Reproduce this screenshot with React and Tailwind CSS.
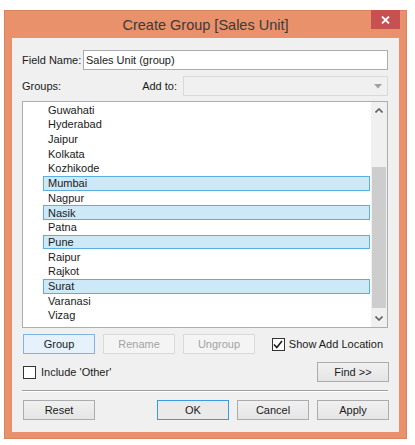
import React from 'react';

// Create Group dialog – Windows 8 style window chrome
const cities = [
  ['Guwahati', false],
  ['Hyderabad', false],
  ['Jaipur', false],
  ['Kolkata', false],
  ['Kozhikode', false],
  ['Mumbai', true],
  ['Nagpur', false],
  ['Nasik', true],
  ['Patna', false],
  ['Pune', true],
  ['Raipur', false],
  ['Rajkot', false],
  ['Surat', true],
  ['Varanasi', false],
  ['Vizag', false],
];

function Btn({ children, variant }) {
  const base = 'w-[72px] h-[20px] flex items-center justify-center border box-border';
  if (variant === 'focus')
    return <div className={`${base} border-[#7eb4ea] bg-[#e5f1fb] text-[#1a1a1a]`}>{children}</div>;
  if (variant === 'default')
    return <div className={`${base} border-[#3c9be0] bg-[#eaeaea] text-[#1a1a1a]`}>{children}</div>;
  if (variant === 'disabled')
    return <div className={`${base} border-[#d9d9d9] bg-[#f4f4f4] text-[#a3a3a3]`}>{children}</div>;
  return <div className={`${base} border-[#acacac] bg-gradient-to-b from-[#f0f0f0] to-[#e5e5e5] text-[#1a1a1a]`}>{children}</div>;
}

function Checkbox({ checked }) {
  return (
    <div className="w-[13px] h-[13px] border border-[#333] bg-white flex items-center justify-center box-border">
      {checked && (
        <svg width="10" height="9" viewBox="0 0 10 9">
          <path d="M1 4.5 L3.8 7.5 L9 1" fill="none" stroke="#222" strokeWidth="1.7" />
        </svg>
      )}
    </div>
  );
}

function Chevron({ up }) {
  return (
    <svg width="8" height="5" viewBox="0 0 8 5">
      <path d={up ? 'M0.5 4.5 L4 1 L7.5 4.5' : 'M0.5 0.5 L4 4 L7.5 0.5'} fill="none" stroke="#606060" strokeWidth="1.6" />
    </svg>
  );
}

export default function App() {
  return (
    <div className="w-[415px] h-[445px] bg-white overflow-hidden text-[11px] text-[#1a1a1a] whitespace-nowrap" style={{ fontFamily: '"Liberation Sans", Arial, sans-serif' }}>
      {/* window frame */}
      <div className="ml-[4px] mt-[10px] w-[403px] h-[429px] bg-[#e8916a] border border-[#d98460] box-border flex flex-col">
        {/* title bar */}
        <div className="h-[27px] flex items-start">
          <div className="w-[35px]" />
          <div className="flex-1 text-center text-[14.5px] text-[#3a3a3a] pt-[5px] leading-[18px]">Create Group [Sales Unit]</div>
          <div className="w-[29px] h-[19px] mr-[6px] -mt-[1px] bg-[#c75050] flex items-center justify-center">
            <svg width="9" height="8" viewBox="0 0 9 8">
              <path d="M1 0.5 L8 7.5 M8 0.5 L1 7.5" stroke="#fff" strokeWidth="1.8" />
            </svg>
          </div>
        </div>

        {/* client area */}
        <div className="mx-[7px] h-[394px] bg-[#f0f0f0] pl-[10px] pr-[11px] pt-[12px] flex flex-col">
          {/* field name */}
          <div className="h-[20px] flex items-center">
            <div className="w-[61px] shrink-0">Field Name:</div>
            <div className="flex-1 h-[20px] bg-white border border-[#abadb3] box-border flex items-center pl-[2px]">
              Sales Unit (group)
            </div>
          </div>

          {/* groups / add to */}
          <div className="mt-[6px] h-[20px] flex items-center">
            <div>Groups:</div>
            <div className="flex-1" />
            <div className="mr-[6px]">Add to:</div>
            <div className="w-[205px] h-[20px] bg-[#f0f0f0] border border-[#d9d9d9] box-border flex items-center justify-end pr-[5px]">
              <svg width="8" height="5" viewBox="0 0 8 5">
                <path d="M0 0 L8 0 L4 4.5 Z" fill="#a0a0a0" />
              </svg>
            </div>
          </div>

          {/* list box */}
          <div className="mt-[5px] h-[227px] bg-white border border-[#abadb3] box-border flex">
            <div className="flex-1 pl-[20px] pr-[1px] pt-[0.6px] overflow-hidden flex flex-col">
              {cities.map(([name, sel]) => (
                <div
                  key={name}
                  className={`h-[14.7px] shrink-0 flex items-center pl-[4px] box-border ${sel ? 'bg-[#cde8f7] border border-[#5aaee0]' : 'border border-transparent'}`}
                >
                  {name}
                </div>
              ))}
            </div>
            {/* scrollbar */}
            <div className="w-[16px] bg-[#f0f0f0] flex flex-col">
              <div className="h-[17px] flex items-center justify-center">
                <Chevron up />
              </div>
              <div className="h-[48px]" />
              <div className="h-[141px] mx-[1px] bg-[#cdcdcd]" />
              <div className="flex-1" />
              <div className="h-[17px] flex items-center justify-center">
                <Chevron />
              </div>
            </div>
          </div>

          {/* action buttons */}
          <div className="mt-[6px] h-[20px] flex items-center pl-[1px]">
            <div className="flex gap-[8px]">
              <Btn variant="focus">Group</Btn>
              <Btn variant="disabled">Rename</Btn>
              <Btn variant="disabled">Ungroup</Btn>
            </div>
            <div className="ml-auto mr-[5px] flex items-center gap-[4px]">
              <Checkbox checked />
              <span>Show Add Location</span>
            </div>
          </div>

          {/* include other / find */}
          <div className="mt-[8px] h-[20px] flex items-center pl-[1px]">
            <div className="flex items-center gap-[5px]">
              <Checkbox />
              <span>Include 'Other'</span>
            </div>
            <div className="ml-auto -mr-[1px]">
              <Btn>Find &gt;&gt;</Btn>
            </div>
          </div>

          {/* separator */}
          <div className="mt-[8px] h-[1px] bg-[#a0a0a0]" />
          <div className="h-[1px] bg-white" />

          {/* dialog buttons */}
          <div className="mt-[8px] h-[20px] flex items-center pl-[1px]">
            <Btn>Reset</Btn>
            <div className="ml-auto -mr-[1px] flex gap-[8px]">
              <Btn variant="default">OK</Btn>
              <Btn>Cancel</Btn>
              <Btn>Apply</Btn>
            </div>
          </div>
        </div>
      </div>
    </div>
  );
}
